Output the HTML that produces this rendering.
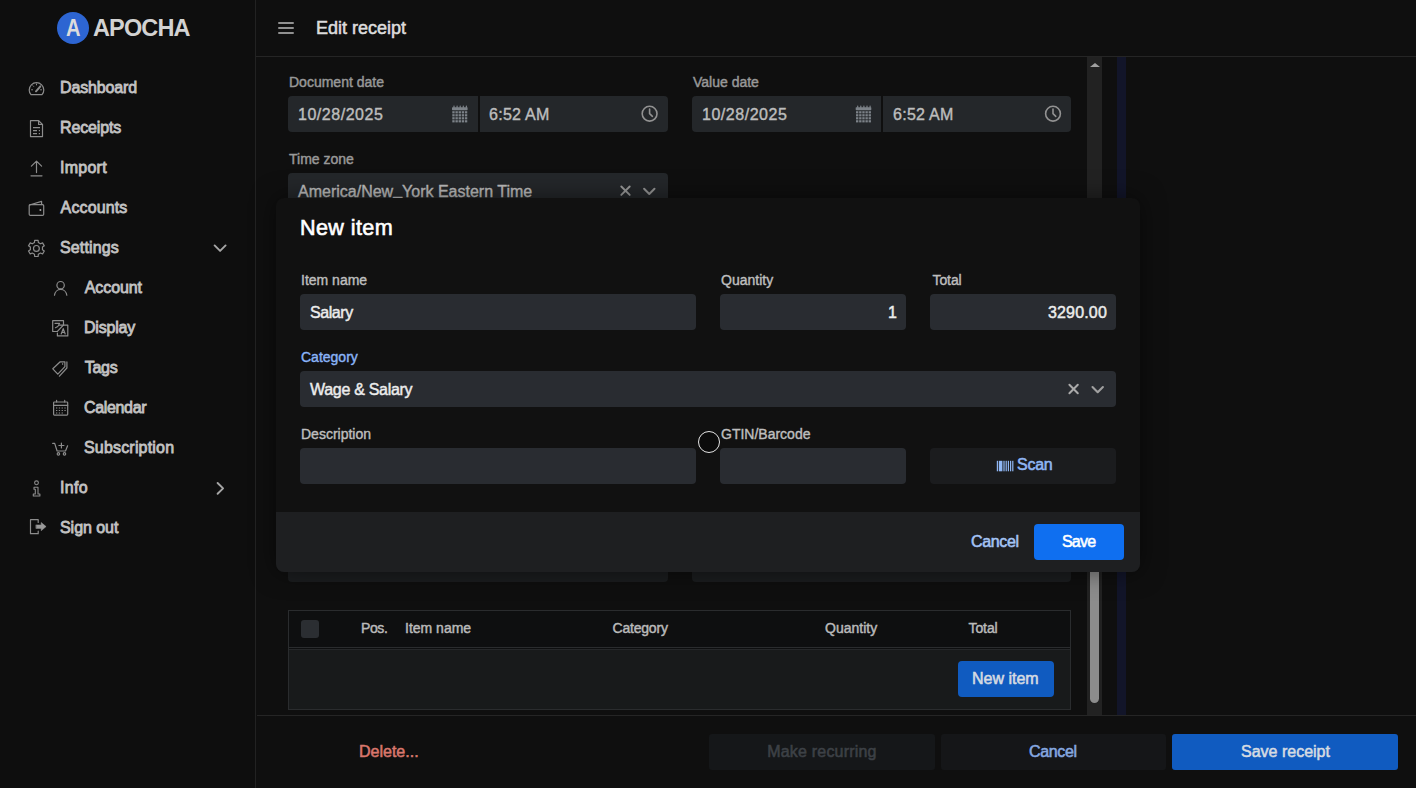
<!DOCTYPE html>
<html lang="en">
<head>
<meta charset="utf-8">
<title>Edit receipt</title>
<style>
*{box-sizing:border-box;margin:0;padding:0}
html,body{width:1416px;height:788px;overflow:hidden;background:#0f0f0f}
body{font-family:"Liberation Sans",sans-serif;color:#c4c4c4;position:relative}
.abs{position:absolute}
.t{position:absolute;white-space:nowrap;line-height:20px;transform-origin:0 50%}
/* sidebar */
#side{left:0;top:0;width:256px;height:788px;background:#0e0e0e;border-right:1px solid #222}
.nav{font-size:16px;color:#c2c2c2;-webkit-text-stroke:0.8px #c2c2c2;margin-top:1px}
.ico{position:absolute;width:20px;height:20px;stroke:#b4b4b4;fill:none;stroke-width:1.3;stroke-linecap:round;stroke-linejoin:round}
/* header */
#head{left:256px;top:0;width:1160px;height:57px;border-bottom:1px solid #252525}
/* fields */
.lbl{font-size:14px;color:#989898;-webkit-text-stroke:.45px #989898}
.inp{position:absolute;height:36px;background:#24272a;border-radius:4px}
.val{margin-top:1px;font-size:16px;color:#bdbdbd;-webkit-text-stroke:.4px #bdbdbd}
/* modal */
#modal{left:276px;top:198px;width:864px;height:373.5px;background:#111111;border-radius:8px;overflow:hidden;box-shadow:0 0 24px rgba(0,0,0,.5)}
#mfoot{left:0;top:314px;width:864px;height:60px;background:#1e1f21}
.minp{position:absolute;height:36px;background:#292c31;border-radius:4px}
.mlbl{font-size:14px;color:#bebebe;-webkit-text-stroke:.4px currentColor}
.mval{margin-top:1px;font-size:16px;color:#ececec;-webkit-text-stroke:.45px #ececec}
.ttl{font-size:18px;color:#dcdcdc;-webkit-text-stroke:.55px #dcdcdc}
.th{font-size:14px;color:#bababa;-webkit-text-stroke:.45px #bababa}
.btn{margin-top:1px;font-size:16px;-webkit-text-stroke:.55px currentColor}
.mbtn{margin-top:1px;font-size:16px;-webkit-text-stroke:.55px currentColor}
.mttl{margin-top:-1px;font-size:21.6px;color:#fff;-webkit-text-stroke:.6px #fff;line-height:24px}
</style>
</head>
<body>
<div id="side" class="abs">
<div class="abs" style="left:57px;top:12px;width:32px;height:32px;border-radius:50%;background:#2d65d2"></div>
<div class="t logoA" style="left:65.8px;top:18px;font-size:24.5px;font-weight:bold;color:#dcdcdc;transform:scaleX(.82)">A</div>
<div class="t logoT" style="left:93px;top:18px;font-size:23.5px;font-weight:bold;color:#d2d2d2;letter-spacing:-0.85px">APOCHA</div>
<div class="t nav" style="left:60px;top:77px;letter-spacing:-.15px">Dashboard</div>
<div class="t nav" style="left:60px;top:117px;letter-spacing:-0.14px">Receipts</div>
<div class="t nav" style="left:60px;top:157px;letter-spacing:0.26px">Import</div>
<div class="t nav" style="left:60.6px;top:197px;letter-spacing:.12px">Accounts</div>
<div class="t nav" style="left:60px;top:237px;letter-spacing:.15px">Settings</div>
<div class="t nav" style="left:84.8px;top:277px;letter-spacing:-0.1px">Account</div>
<div class="t nav" style="left:84px;top:317px;letter-spacing:-0.2px">Display</div>
<div class="t nav" style="left:84.8px;top:357px;letter-spacing:-0.3px">Tags</div>
<div class="t nav" style="left:84px;top:397px;letter-spacing:-0.34px">Calendar</div>
<div class="t nav" style="left:84px;top:437px;letter-spacing:0.18px">Subscription</div>
<div class="t nav" style="left:60px;top:477px;letter-spacing:.35px">Info</div>
<div class="t nav" style="left:60px;top:517px;letter-spacing:-0.05px">Sign out</div>
<svg class="abs" style="left:0;top:0" width="256" height="788" viewBox="0 0 256 788" fill="none" stroke="#8c8c8c" stroke-width="1.2" stroke-linecap="round" stroke-linejoin="round">
<!-- dashboard -->
<path d="M31 94.6 Q29.2 92.6 29.2 90 A7.3 7.3 0 0 1 43.8 90 Q43.8 92.6 42 94.6 Z"/>
<path d="M36 91.3 L40.2 86.6" stroke-width="2"/>
<path d="M31.6 89.8h.9M33 85.8l.6.6M36.5 84v.9M40 85.8l-.3.3M40.6 89.8h.9" stroke-width="1"/>
<!-- receipts -->
<path d="M30.5 120.6 H38.6 L42.5 124.5 V136.6 H30.5 Z"/>
<path d="M38.6 120.6 V124.5 H42.5"/>
<path d="M33 127.6 H40 M33 130.6 H37 M38.8 130.6 H40 M33 133.6 H37 M38.8 133.6 H40" stroke-width="1.4" stroke-linecap="butt"/>
<!-- import -->
<path d="M36.5 161.2 V172.6 M31.4 166.2 L36.5 161.1 L41.6 166.2 M31 175.8 H42"/>
<!-- accounts -->
<path d="M30.4 204.6 H42.5 Q43.7 204.6 43.7 205.8 V214.2 Q43.7 215.4 42.5 215.4 H30.4 Q29.2 215.4 29.2 214.2 V205.8 Q29.2 204.6 30.4 204.6 Z"/>
<path d="M29.4 205 L41.6 201.4 V204.6"/>
<circle cx="40.4" cy="210" r="1" fill="#a2a2a2" stroke="none"/>
<!-- settings -->
<path d="M34.67 240.28 L38.13 240.28 L38.32 242.50 L40.55 243.79 L42.57 242.85 L44.29 245.84 L42.46 247.11 L42.46 249.69 L44.29 250.96 L42.57 253.95 L40.55 253.01 L38.32 254.30 L38.13 256.52 L34.67 256.52 L34.48 254.30 L32.25 253.01 L30.23 253.95 L28.51 250.96 L30.34 249.69 L30.34 247.11 L28.51 245.84 L30.23 242.85 L32.25 243.79 L34.48 242.50 Z" stroke-linejoin="round"/>
<circle cx="36.4" cy="248.4" r="2.9"/>
<path d="M214.6 245.4 L220.1 250.9 L225.6 245.4" stroke-width="1.9" stroke="#a6a6a6"/>
<!-- account -->
<circle cx="60.6" cy="285.2" r="3.7"/>
<path d="M54.5 295.2 A6.2 6.6 0 0 1 66.8 295.2"/>
<!-- display -->
<path d="M57.4 331.5 H52.7 V320.7 H63.5 V325"/>
<path d="M63.5 325 L57.4 331.4"/>
<path d="M59.2 325.1 H67.8 V335.9 H57.4 V333.2"/>
<path d="M55 323.4 H59.6 M59.4 323.6 Q58.6 326.6 55.4 327.8" stroke-width="1.1"/>
<path d="M61.2 334 L63.2 328.6 L65.2 334 M61.9 332.3 H64.5" stroke-width="1.2"/>
<!-- tags -->
<path d="M52.8 368.8 L60.2 361.8 H64.9 V366.6 L57.8 374.2 Z"/>
<path d="M66.9 361.9 V368 L59.4 376.2"/>
<circle cx="62.6" cy="364" r=".7" fill="#a2a2a2" stroke="none"/>
<!-- calendar -->
<rect x="53.6" y="402" width="14.1" height="13.1" rx=".8"/>
<path d="M53.6 405.3 H67.7 M56.6 400.4 V402 M64.7 400.4 V402"/>
<path d="M56 408 h1.3 M58.8 408 h1.3 M61.6 408 h1.3 M64.4 408 h1.3 M56 410.5 h1.3 M58.8 410.5 h1.3 M61.6 410.5 h1.3 M64.4 410.5 h1.3 M56 413 h1.3 M58.8 413 h1.3 M61.6 413 h1.3" stroke-width="1.2" stroke-linecap="butt"/>
<!-- subscription -->
<path d="M52.7 443.4 H54.7 L57.1 451 H65.5 L67.6 445.8"/>
<circle cx="58.4" cy="453.9" r="1.2"/><circle cx="64.5" cy="453.9" r="1.2"/>
<path d="M61.4 443 V448 M58.9 445.5 H63.9"/>
<!-- info -->
<circle cx="36.5" cy="482.8" r="1.9" stroke-width="1.1"/>
<path d="M34 487.2 H38 V494 H39.9 V496 H33.3 V494 H35.3 V489.2 H34 Z" stroke-width="1.1"/>
<path d="M217.6 483 L223.1 488.4 L217.6 493.8" stroke-width="1.9" stroke="#a6a6a6"/>
<!-- sign out -->
<path d="M38.2 522.4 V519.7 H30.5 V533.7 H38.2 V531.2"/>
<path d="M36.2 524.9 H41.2 V522.5 L46.1 526.6 L41.2 530.7 V528.4 H36.2 Z" fill="#9a9a9a" stroke="#9a9a9a" stroke-width=".5"/>
</svg>
</div>
<div id="head" class="abs">
<div class="abs" style="left:22px;top:21.9px;width:16px;height:1.9px;background:#909090;border-radius:1px"></div>
<div class="abs" style="left:22px;top:26.9px;width:16px;height:1.9px;background:#909090;border-radius:1px"></div>
<div class="abs" style="left:22px;top:31.7px;width:16px;height:1.9px;background:#909090;border-radius:1px"></div>
<div class="t ttl" style="left:60px;top:18px">Edit receipt</div>
</div>
<div id="content" class="abs" style="left:0;top:0;width:1416px;height:788px">
<div class="t lbl" style="left:289px;top:72px">Document date</div>
<div class="inp" style="left:288px;top:96px;width:190px;border-radius:4px 0 0 4px"></div>
<div class="inp" style="left:480px;top:96px;width:188px;border-radius:0 4px 4px 0"></div>
<div class="t val" style="left:298px;top:104px;letter-spacing:0.53px">10/28/2025</div>
<div class="t val" style="left:489px;top:104px;letter-spacing:0.28px">6:52 AM</div>
<div class="t lbl" style="left:693px;top:72px">Value date</div>
<div class="inp" style="left:692px;top:96px;width:189px;border-radius:4px 0 0 4px"></div>
<div class="inp" style="left:883px;top:96px;width:188px;border-radius:0 4px 4px 0"></div>
<div class="t val" style="left:702px;top:104px;letter-spacing:0.53px">10/28/2025</div>
<div class="t val" style="left:893px;top:104px;letter-spacing:0.28px">6:52 AM</div>
<div class="t lbl" style="left:289px;top:149px">Time zone</div>
<div class="inp" style="left:288px;top:173px;width:380px"></div>
<div class="t val" style="left:298px;top:181px">America/New<span style="position:relative;top:-2.5px">_</span>York Eastern Time</div>
<svg class="abs" style="left:0;top:0" width="1416" height="788" viewBox="0 0 1416 788"><g fill="#7c8288" stroke="none"><rect x="452" y="107.19999999999999" width="15.6" height="3" rx=".6"/><rect x="453.4" y="105.6" width="1.2" height="2.4" rx=".5"/><rect x="456.5" y="105.6" width="1.2" height="2.4" rx=".5"/><rect x="459.59999999999997" y="105.6" width="1.2" height="2.4" rx=".5"/><rect x="462.7" y="105.6" width="1.2" height="2.4" rx=".5"/><rect x="465.79999999999995" y="105.6" width="1.2" height="2.4" rx=".5"/><rect x="452.30" y="111.20" width="2.35" height="2.2"/><rect x="455.45" y="111.20" width="2.35" height="2.2"/><rect x="458.60" y="111.20" width="2.35" height="2.2"/><rect x="461.75" y="111.20" width="2.35" height="2.2"/><rect x="464.90" y="111.20" width="2.35" height="2.2"/><rect x="452.30" y="114.20" width="2.35" height="2.2"/><rect x="455.45" y="114.20" width="2.35" height="2.2"/><rect x="458.60" y="114.20" width="2.35" height="2.2"/><rect x="461.75" y="114.20" width="2.35" height="2.2"/><rect x="464.90" y="114.20" width="2.35" height="2.2"/><rect x="452.30" y="117.20" width="2.35" height="2.2"/><rect x="455.45" y="117.20" width="2.35" height="2.2"/><rect x="458.60" y="117.20" width="2.35" height="2.2"/><rect x="461.75" y="117.20" width="2.35" height="2.2"/><rect x="464.90" y="117.20" width="2.35" height="2.2"/><rect x="452.30" y="120.20" width="2.35" height="2.2"/><rect x="455.45" y="120.20" width="2.35" height="2.2"/><rect x="458.60" y="120.20" width="2.35" height="2.2"/><rect x="461.75" y="120.20" width="2.35" height="2.2"/><rect x="464.90" y="120.20" width="2.35" height="2.2"/></g><g fill="#7c8288" stroke="none"><rect x="855.7" y="107.19999999999999" width="15.6" height="3" rx=".6"/><rect x="857.1" y="105.6" width="1.2" height="2.4" rx=".5"/><rect x="860.2" y="105.6" width="1.2" height="2.4" rx=".5"/><rect x="863.3000000000001" y="105.6" width="1.2" height="2.4" rx=".5"/><rect x="866.4" y="105.6" width="1.2" height="2.4" rx=".5"/><rect x="869.5" y="105.6" width="1.2" height="2.4" rx=".5"/><rect x="856.00" y="111.20" width="2.35" height="2.2"/><rect x="859.15" y="111.20" width="2.35" height="2.2"/><rect x="862.30" y="111.20" width="2.35" height="2.2"/><rect x="865.45" y="111.20" width="2.35" height="2.2"/><rect x="868.60" y="111.20" width="2.35" height="2.2"/><rect x="856.00" y="114.20" width="2.35" height="2.2"/><rect x="859.15" y="114.20" width="2.35" height="2.2"/><rect x="862.30" y="114.20" width="2.35" height="2.2"/><rect x="865.45" y="114.20" width="2.35" height="2.2"/><rect x="868.60" y="114.20" width="2.35" height="2.2"/><rect x="856.00" y="117.20" width="2.35" height="2.2"/><rect x="859.15" y="117.20" width="2.35" height="2.2"/><rect x="862.30" y="117.20" width="2.35" height="2.2"/><rect x="865.45" y="117.20" width="2.35" height="2.2"/><rect x="868.60" y="117.20" width="2.35" height="2.2"/><rect x="856.00" y="120.20" width="2.35" height="2.2"/><rect x="859.15" y="120.20" width="2.35" height="2.2"/><rect x="862.30" y="120.20" width="2.35" height="2.2"/><rect x="865.45" y="120.20" width="2.35" height="2.2"/><rect x="868.60" y="120.20" width="2.35" height="2.2"/></g><g fill="none" stroke="#929292" stroke-width="1.6" stroke-linecap="round" stroke-linejoin="round"><circle cx="649.6" cy="113.7" r="7.4"/><path d="M649.6 109.10000000000001 V113.7 L652.4 116.3"/></g><g fill="none" stroke="#929292" stroke-width="1.6" stroke-linecap="round" stroke-linejoin="round"><circle cx="1053" cy="113.7" r="7.4"/><path d="M1053 109.10000000000001 V113.7 L1055.8 116.3"/></g><path d="M621.3 186.5 L629.7 194.89999999999998 M629.7 186.5 L621.3 194.89999999999998" stroke="#9a9a9a" stroke-width="1.9" fill="none" stroke-linecap="round"/><path d="M644.0999999999999 188.8 L649.3 194.0 L654.5 188.8" stroke="#949494" stroke-width="2" fill="none" stroke-linecap="round" stroke-linejoin="round"/></svg>
<!-- peeking inputs under modal -->
<div class="inp" style="left:288px;top:546px;width:380px;background:#1b1d1f"></div>
<div class="inp" style="left:692px;top:546px;width:379px;background:#1b1d1f"></div>
<!-- table -->
<div class="abs" style="left:288px;top:610px;width:783px;height:100px;border:1px solid #2a2c2e;background:#0e0f10"></div>
<div class="abs" style="left:289px;top:647px;width:781px;height:1px;background:#2a2c2e"></div>
<div class="abs" style="left:289px;top:649px;width:781px;height:60px;background:#181a1b;border-top:1px solid #26282a"></div>
<div class="abs" style="left:301px;top:620px;width:18px;height:18px;border-radius:3px;background:#2b2e32"></div>
<div class="t th" style="left:361px;top:618px;letter-spacing:-0.4px">Pos.</div>
<div class="t th" style="left:405px;top:618px">Item name</div>
<div class="t th" style="left:612.5px;top:618px;letter-spacing:-.2px">Category</div>
<div class="t th" style="left:825px;top:618px">Quantity</div>
<div class="t th" style="left:968.5px;top:618px;letter-spacing:-0.1px">Total</div>
<div class="abs" style="left:958px;top:661px;width:96px;height:36px;border-radius:4px;background:#105bc0"></div>
<div class="t btn" style="left:972px;top:668px;color:#d6dbe2">New item</div>
<!-- scrollbar -->
<div class="abs" style="left:1087px;top:57px;width:15px;height:658px;background:#222222"></div>
<div class="abs" style="left:1090px;top:440px;width:9px;height:263px;border-radius:5px;background:#8c8c8c"></div>
<div class="abs" style="left:1089.5px;top:63px;width:0;height:0;border-left:5px solid transparent;border-right:5px solid transparent;border-bottom:4.8px solid #a0a0a0"></div>
<div class="abs" style="left:1117px;top:57px;width:9px;height:658px;background:#121529"></div>
</div>
<div id="foot" class="abs" style="left:257px;top:715px;width:1159px;height:73px;border-top:1px solid #252525;background:#0f0f0f">
<div class="t btn" style="left:102px;top:25px;color:#d9776c">Delete...</div>
<div class="abs" style="left:452px;top:18px;width:226px;height:36px;border-radius:3px;background:#151719"></div>
<div class="t btn" style="left:510.2px;top:25px;color:#3d4146;letter-spacing:0.2px">Make recurring</div>
<div class="abs" style="left:684px;top:18px;width:225px;height:36px;border-radius:3px;background:#151618"></div>
<div class="t btn" style="left:772px;top:25px;color:#86a8e0;letter-spacing:-0.35px">Cancel</div>
<div class="abs" style="left:915px;top:18px;width:226px;height:36px;border-radius:3px;background:#105bc0"></div>
<div class="t btn" style="left:984px;top:25px;color:#d6dbe2">Save receipt</div>
</div>
<div id="modal" class="abs">
<div class="t mttl" style="left:24px;top:19px;letter-spacing:0.38px">New item</div>
<div class="t mlbl" style="left:25px;top:72px">Item name</div>
<div class="t mlbl" style="left:445px;top:72px">Quantity</div>
<div class="t mlbl" style="left:656.5px;top:72px;letter-spacing:-0.1px">Total</div>
<div class="minp" style="left:24px;top:96px;width:396px"></div>
<div class="minp" style="left:444px;top:96px;width:186px"></div>
<div class="minp" style="left:654px;top:96px;width:186px"></div>
<div class="t mval" style="left:34px;top:104px;letter-spacing:-0.42px">Salary</div>
<div class="t mval" style="right:243px;top:104px">1</div>
<div class="t mval" style="right:33px;top:104px;letter-spacing:0.17px">3290.00</div>
<div class="t mlbl" style="left:25px;top:149px;color:#8ab4f8">Category</div>
<div class="minp" style="left:24px;top:173px;width:816px"></div>
<div class="t mval" style="left:34px;top:181px;letter-spacing:-0.3px">Wage &amp; Salary</div>
<div class="t mlbl" style="left:25px;top:226px">Description</div>
<div class="t mlbl" style="left:445px;top:226px">GTIN/Barcode</div>
<div class="minp" style="left:24px;top:250px;width:396px"></div>
<div class="minp" style="left:444px;top:250px;width:186px"></div>
<div class="minp" style="left:654px;top:250px;width:186px;background:#1b1c1e"></div>
<div class="t mbtn" style="left:741px;top:256px;color:#8fb6f3;letter-spacing:-0.27px">Scan</div>
<svg class="abs" style="left:0;top:0" width="863" height="374" viewBox="276 198 863 374"><path d="M1069.3999999999999 384.8 L1077.8 393.2 M1077.8 384.8 L1069.3999999999999 393.2" stroke="#aaaaaa" stroke-width="2" fill="none" stroke-linecap="round"/><path d="M1092.5 387.0 L1097.7 392.20000000000005 L1102.9 387.0" stroke="#a0a0a0" stroke-width="2.1" fill="none" stroke-linecap="round" stroke-linejoin="round"/><g fill="#8fb6f3"><rect x="996.8" y="460.8" width="1.2" height="10.5"/><rect x="998.8" y="460.8" width="3.6" height="10.5"/><rect x="1003.4" y="460.8" width="1.2" height="10.5"/><rect x="1005.6" y="460.8" width="1.2" height="10.5"/><rect x="1007.8" y="460.8" width="1.2" height="10.5"/><rect x="1010.0" y="460.8" width="1.2" height="10.5"/><rect x="1012.2" y="460.8" width="1.2" height="10.5"/></g></svg>
<div id="mfoot" class="abs">
<div class="t mbtn" style="left:695px;top:19px;color:#a4c3f5;letter-spacing:-0.35px">Cancel</div>
<div class="abs" style="left:758px;top:12px;width:90px;height:36px;border-radius:4px;background:#0f6ff0"></div>
<div class="t mbtn" style="left:786px;top:19px;color:#fff;letter-spacing:-0.8px">Save</div>
</div>
</div>
<!-- pointer ring -->
<div class="abs" style="left:697.9px;top:430.7px;width:22.5px;height:22.5px;border-radius:50%;border:1.4px solid #e4e4e4;background:#0b0b0b"></div>
</body>
</html>
